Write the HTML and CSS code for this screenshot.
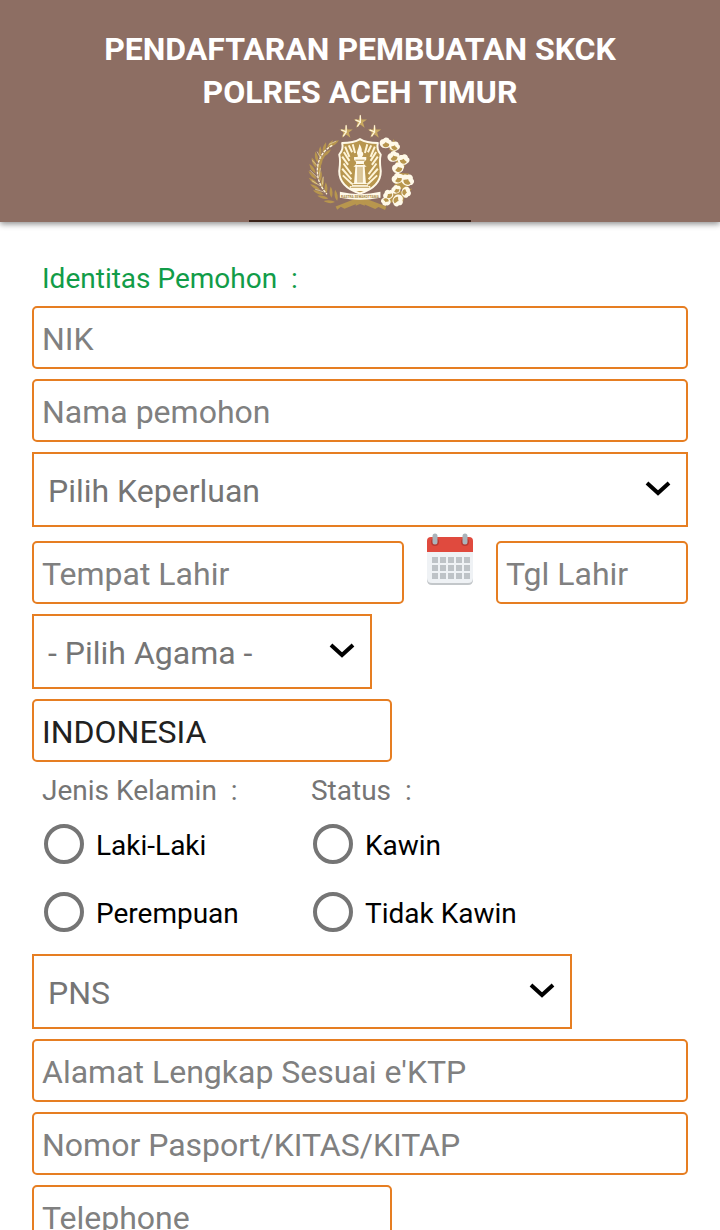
FILE: index.html
```
<!DOCTYPE html>
<html lang="id">
<head>
  <meta charset="UTF-8">
  <meta name="viewport" content="width=device-width, initial-scale=1">
  <title>Pendaftaran Pembuatan SKCK</title>
  <link rel="stylesheet" href="styles.css">
</head>
<body>

  <header class="header">
    <h1>PENDAFTARAN PEMBUATAN SKCK<br>POLRES ACEH TIMUR</h1>
    <svg class="logo" viewBox="44 20 336 297" role="img" aria-label="Logo Polri">
      <defs>
        <path id="star" d="M0-22 4-6 20-6 8 3 13 19 0 9-13 19-8 3-20-6-4-6Z"/>
        <path id="leaf" d="M0 0C-8-9-8-22-4-34C3-23 4-10 0 0Z"/>
        <g id="flower">
          <path d="M-16 6C-22-4-16-14-7-14C-3-21 9-20 11-12C20-11 21 1 14 6C12 15-10 17-16 6Z"/>
          <path fill="#b8964e" d="M-10 3C-6 0-2-1 0-5C3-1 8-1 12 2C9 13-6 14-10 3Z"/>
        </g>
      </defs>
      <!-- bintang -->
      <g fill="#c9a961">
        <use href="#star" x="213" y="43"/>
        <use href="#star" x="170" y="73"/>
        <use href="#star" x="256" y="73"/>
      </g>
      <path fill="none" stroke="#fff5d8" stroke-width="4" d="M213 24V44L198 38M213 44 204 58M170 54V74L155 68M170 74 161 88M256 54V74L241 68M256 74 247 88"/>
      <!-- padi -->
      <g fill="#b8964e">
        <use href="#leaf" transform="translate(120 119) rotate(62)"/>
        <use href="#leaf" transform="translate(112 128) rotate(38)"/>
        <use href="#leaf" transform="translate(100 139) rotate(22)"/>
        <use href="#leaf" transform="translate(91 152) rotate(8)"/>
        <use href="#leaf" transform="translate(84 167) rotate(-6)"/>
        <use href="#leaf" transform="translate(80 183) rotate(-18)"/>
        <use href="#leaf" transform="translate(78 200) rotate(-28)"/>
        <use href="#leaf" transform="translate(80 217) rotate(-38)"/>
        <use href="#leaf" transform="translate(84 234) rotate(-46)"/>
        <use href="#leaf" transform="translate(91 250) rotate(-54)"/>
        <use href="#leaf" transform="translate(102 264) rotate(-62)"/>
        <use href="#leaf" transform="translate(116 276) rotate(-70)"/>
        <use href="#leaf" transform="translate(136 287) rotate(-78)"/>
        <use href="#leaf" transform="translate(98 150) rotate(56)"/>
        <use href="#leaf" transform="translate(88 168) rotate(42)"/>
        <use href="#leaf" transform="translate(84 187) rotate(32)"/>
        <use href="#leaf" transform="translate(84 206) rotate(22)"/>
        <use href="#leaf" transform="translate(90 226) rotate(14)"/>
        <use href="#leaf" transform="translate(98 245) rotate(8)"/>
        <use href="#leaf" transform="translate(110 261) rotate(4)"/>
        <use href="#leaf" transform="translate(126 274) rotate(2)"/>
        <use href="#leaf" transform="translate(143 283) rotate(-4)"/>
      </g>
      <path fill="none" stroke="#fff5d8" stroke-width="4" stroke-dasharray="9 3" d="M128 115C76 143 66 214 112 263"/>
      <path fill="none" stroke="#f0dfb2" stroke-width="2" d="M140 102 118 112M84 214 60 190M92 238 66 222M102 256 76 248M86 180 66 160M94 156 82 134M88 210 92 184M98 234 101 210"/>
      <!-- kapas -->
      <g fill="#b8964e">
        <path d="M300 128C305 112 318 105 326 116L318 140ZM322 150 346 142 348 180 318 200ZM322 198 360 200 358 250 316 246ZM288 256 310 250 350 256 342 288 294 288Z"/>
        <path d="M302 124 314 96 321 112ZM352 250 370 246 352 268Z"/>
      </g>
      <g fill="#fff9e8">
        <use href="#flower" x="290" y="110"/>
        <use href="#flower" transform="translate(316 119) rotate(20) scale(.9)"/>
        <use href="#flower" transform="translate(314 151) rotate(-12)"/>
        <use href="#flower" transform="translate(343 160) rotate(18)"/>
        <use href="#flower" transform="translate(328 185) rotate(-14)"/>
        <use href="#flower" transform="translate(355 222) rotate(30) scale(1.1)"/>
        <use href="#flower" transform="translate(327 217) rotate(-20)"/>
        <use href="#flower" transform="translate(350 257) rotate(100) scale(.9)"/>
        <use href="#flower" transform="translate(322 250) rotate(-20) scale(.8)"/>
        <use href="#flower" transform="translate(299 266) rotate(-35) scale(.9)"/>
        <use href="#flower" transform="translate(325 281) rotate(120)"/>
        <use href="#flower" transform="translate(291 284) rotate(200) scale(.8)"/>
      </g>
      <g fill="#b8964e">
        <!-- tangkai -->
        <path d="M138 300 206 274 228 276 292 300 288 311 268 302 258 308 212 288 165 307 154 301 143 310Z"/>
        <path d="M199 276H225L227 298 212 293 199 298Z"/>
      </g>
      <!-- perisai -->
      <path fill="#b8964e" stroke="#fff9e8" stroke-width="6" stroke-linejoin="round" d="M212 96C196 106 173 108 158 108C162 124 158 133 149 143C154 161 151 177 149 193C149 229 176 250 212 261C248 250 275 229 275 193C273 177 270 161 275 143C266 133 262 124 266 108C251 108 228 106 212 96Z"/>
      <g fill="none" stroke="#fff5d8" stroke-width="6">
        <path d="M178 115 188 136M167 119 180 150M163 135 180 162M158 149 176 174M162 170 186 202M158 186 186 218M160 206 188 232M190 112 197 138"/>
        <path d="M246 115 236 136M257 119 244 150M261 135 244 162M266 149 248 174M262 170 238 202M266 186 238 218M264 206 236 232M234 112 227 138"/>
      </g>
      <!-- tugu -->
      <path fill="#fff9e8" d="M205 145C199 134 208 129 210 111C216 119 219 129 217 134C225 138 222 148 217 151H205ZM194 150H231V158L226 164H224V172L232 180H226L230 230H236V238H243V245L231 253H193L181 245V238H188V230H194L198 180H192L200 172V164H198L194 158Z"/>
      <path fill="none" stroke="#b8964e" stroke-width="3" d="M206 180V228M212 180V228M218 180V228M198 160H226M201 173H223M190 234H234M184 242H240"/>
      <!-- pita -->
      <path fill="#fff9e8" d="M151 256Q212 270 274 256V274Q212 286 151 274Z"/>
      <text x="212" y="276" text-anchor="middle" class="motto">RASTRA SEWAKOTTAMA</text>
    </svg>
    <span class="underline"></span>
  </header>

  <form class="form">
    <h2 class="title">Identitas Pemohon&nbsp; :</h2>

    <input class="field" type="text" placeholder="NIK" aria-label="NIK">
    <input class="field" type="text" placeholder="Nama pemohon" aria-label="Nama pemohon">

    <div class="select">
      <select aria-label="Keperluan">
        <option>Pilih Keperluan</option>
      </select>
      <svg class="arrow" viewBox="0 0 24 14"><path d="M1 2 12 12 23 2"/></svg>
    </div>

    <div class="birth">
      <input class="field place" type="text" placeholder="Tempat Lahir" aria-label="Tempat Lahir">
      <button class="calendar" type="button" aria-label="Pilih tanggal">
        <svg viewBox="0 0 46 54">
          <path fill="#c3c7ca" d="M0 16H46V48Q46 53 41 53H5Q0 53 0 48Z"/>
          <path fill="#eff2f5" d="M0 16H46V46Q46 51 41 51H5Q0 51 0 46Z"/>
          <path fill="#e04a3e" d="M0 20V9Q0 5 4 5H42Q46 5 46 9V20Z"/>
          <path fill="#b93a32" d="M4 10a4 4 0 1 0 8 0a4 4 0 1 0-8 0M34 10a4 4 0 1 0 8 0a4 4 0 1 0-8 0"/>
          <path stroke="#aab4bb" stroke-width="5" stroke-linecap="round" d="M8 4V10M38 4V10"/>
          <path stroke="#bec3c7" stroke-width="6" stroke-dasharray="6 2" d="M5 28H43M5 36H43M5 44H43"/>
        </svg>
      </button>
      <input class="field date" type="text" placeholder="Tgl Lahir" aria-label="Tanggal Lahir">
    </div>

    <div class="select religion">
      <select aria-label="Agama">
        <option>- Pilih Agama -</option>
      </select>
      <svg class="arrow" viewBox="0 0 24 14"><path d="M1 2 12 12 23 2"/></svg>
    </div>

    <input class="field short" type="text" value="INDONESIA" aria-label="Kewarganegaraan">

    <div class="options">
      <fieldset>
        <legend>Jenis Kelamin&nbsp; :</legend>
        <label><input type="radio" name="kelamin"><span>Laki-Laki</span></label>
        <label><input type="radio" name="kelamin"><span>Perempuan</span></label>
      </fieldset>
      <fieldset>
        <legend>Status&nbsp; :</legend>
        <label><input type="radio" name="status"><span>Kawin</span></label>
        <label><input type="radio" name="status"><span>Tidak Kawin</span></label>
      </fieldset>
    </div>

    <div class="select job">
      <select aria-label="Pekerjaan">
        <option>PNS</option>
      </select>
      <svg class="arrow" viewBox="0 0 24 14"><path d="M1 2 12 12 23 2"/></svg>
    </div>

    <input class="field" type="text" placeholder="Alamat Lengkap Sesuai e'KTP" aria-label="Alamat">
    <input class="field" type="text" placeholder="Nomor Pasport/KITAS/KITAP" aria-label="Nomor Pasport">
    <input class="field short" type="tel" placeholder="Telephone" aria-label="Telephone">
  </form>

</body>
</html>
```
FILE: styles.css
```
* {
  box-sizing: border-box;
  font-family: Roboto, "Liberation Sans", sans-serif;
}

body {
  margin: 0;
  height: 100vh;
  display: flex;
  flex-direction: column;
  background-color: #fff;
}

.header {
  flex-shrink: 0;
  display: flex;
  flex-direction: column;
  align-items: center;
  padding-top: 28px;
  background-color: #8d6e63;
  box-shadow: 0 2px 6px rgba(0, 0, 0, 0.45);
  z-index: 1;
}

h1 {
  margin: 0;
  font-size: 32px;
  line-height: 43px;
  font-weight: bold;
  text-align: center;
  color: #fff;
}

.logo {
  width: 112px;
  height: 98px;
  margin-bottom: 8px;
}

.motto {
  font-size: 10px;
  font-weight: bold;
  fill: #a58445;
}

.underline {
  width: 222px;
  height: 2px;
  background-color: #3b2218;
}

.form {
  flex: 1;
  min-height: 0;
  overflow-y: auto;
  scrollbar-width: none;
  padding: 40px 32px;
}

.title {
  margin: 0;
  padding-left: 10px;
  font-size: 28px;
  line-height: 34px;
  font-weight: normal;
  color: #119c48;
}

.field {
  display: block;
  width: 100%;
  height: 63px;
  margin: 10px 0 0;
  padding: 2px 8px 0;
  font-size: 32px;
  color: #212121;
  background-color: #fff;
  border: 2px solid #e67e22;
  border-radius: 5px;
}

.field::placeholder {
  color: #808080;
}

.short {
  width: 360px;
}

.select {
  position: relative;
  margin-top: 10px;
}

.select select {
  display: block;
  appearance: none;
  width: 100%;
  height: 75px;
  padding: 2px 60px 0 14px;
  font-size: 32px;
  color: #757575;
  background-color: #fff;
  border: 2px solid #e67e22;
  border-radius: 0;
}

.arrow {
  position: absolute;
  right: 18px;
  top: 29px;
  width: 24px;
  height: 14px;
  fill: none;
  stroke: #000;
  stroke-width: 4;
  overflow: visible;
  pointer-events: none;
}

.religion {
  width: 340px;
}

.job {
  width: 540px;
  margin-top: 8px;
}

.birth {
  display: flex;
  align-items: flex-end;
  height: 72px;
  margin-top: 5px;
}

.birth .field {
  margin: 0;
}

.birth .place {
  flex: 1;
  min-width: 0;
}

.birth .date {
  width: 192px;
}

.calendar {
  align-self: flex-start;
  width: 46px;
  height: 54px;
  margin: 0 23px;
  padding: 0;
  background: none;
  border: none;
}

.calendar svg {
  display: block;
}

.options {
  display: grid;
  grid-template-columns: 41% 1fr;
  margin-top: 12px;
}

fieldset {
  min-width: 0;
  margin: 0;
  padding: 0;
  border: none;
}

legend {
  padding: 0 0 2px 10px;
  font-size: 28px;
  line-height: 34px;
  color: #757575;
}

.options label {
  display: flex;
  align-items: center;
  gap: 12px;
  height: 68px;
  padding-left: 12px;
  font-size: 28px;
  color: #000;
}

.options span {
  padding-top: 2px;
}

.options input {
  appearance: none;
  width: 40px;
  height: 40px;
  margin: 0;
  border: 4px solid #757575;
  border-radius: 50%;
}

.options input:checked {
  background: radial-gradient(#e67e22 50%, #fff 55%);
}
```
